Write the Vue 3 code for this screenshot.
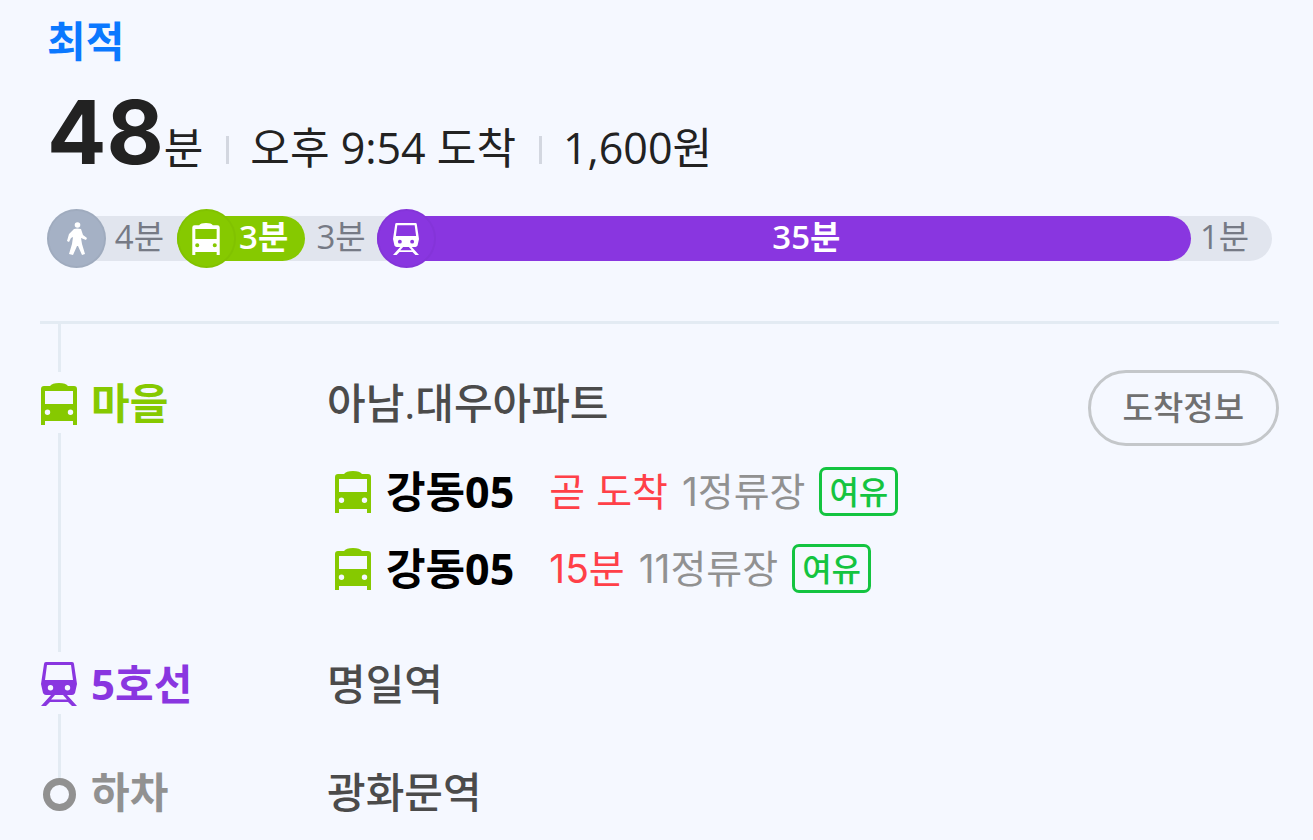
<template>
  <main class="route-page">
    <header class="route-summary">
      <h1 class="route-type">최적</h1>

      <div class="summary-line">
        <p class="total-time"><strong>48</strong><span>분</span></p>
        <span class="bar"></span>
        <p>오후 9:54 도착</p>
        <span class="bar"></span>
        <p>1,600원</p>
      </div>

      <ol class="time-track">
        <li
          v-for="(segment, index) in segments"
          :key="index"
          class="segment"
          :class="segment.type"
          :style="{ width: segment.share + '%' }"
        >
          <span v-if="segment.icon" class="segment-icon">
            <svg v-if="segment.icon === 'walk'" class="walk-icon" viewBox="0 0 20 33" aria-hidden="true">
              <circle cx="10.500" cy="3" r="2.800" />
              <path d="M7 7q3-1 7 0l2 6 4 3-1 2-5-2 1 6 3 10-3 1-4-9h-1l-4 9-4-1 3-10 1-7-2 1-2 4-2-1 2-7z" />
            </svg>
            <svg v-else-if="segment.icon === 'bus'" class="bus-icon" viewBox="0 0 36 42" aria-hidden="true">
              <path fill-rule="evenodd" :d="busPath" />
            </svg>
            <svg v-else class="train-icon" viewBox="0 0 36 44" aria-hidden="true">
              <path fill-rule="evenodd" :d="trainPath" />
            </svg>
          </span>
          <span class="segment-time">{{ segment.minutes }}분</span>
        </li>
      </ol>
    </header>

    <ol class="steps">
      <li class="step">
        <div class="rail">
          <span class="line first"></span>
          <svg class="step-icon bus" viewBox="0 0 36 42" aria-hidden="true">
            <path fill-rule="evenodd" :d="busPath" />
          </svg>
          <span class="line rest"></span>
        </div>
        <strong class="step-label bus">마을</strong>
        <div class="step-body">
          <h2>아남.대우아파트</h2>
          <ul class="arrivals">
            <li v-for="(bus, index) in arrivals" :key="index" class="arrival">
              <svg class="arrival-icon bus" viewBox="0 0 36 42" aria-hidden="true">
                <path fill-rule="evenodd" :d="busPath" />
              </svg>
              <strong>{{ bus.name }}</strong>
              <span class="remain">{{ bus.remain }}</span>
              <span class="stops">{{ bus.stops }}정류장</span>
              <span class="badge">{{ bus.crowd }}</span>
            </li>
          </ul>
        </div>
        <button type="button" class="info-btn">도착정보</button>
      </li>

      <li class="step subway-step">
        <div class="rail">
          <svg class="step-icon train" viewBox="0 0 36 44" aria-hidden="true">
            <path fill-rule="evenodd" :d="trainPath" />
          </svg>
          <span class="line rest"></span>
        </div>
        <strong class="step-label train">5호선</strong>
        <div class="step-body">
          <h2>명일역</h2>
        </div>
      </li>

      <li class="step end-step">
        <div class="rail">
          <span class="line first"></span>
          <span class="end-dot"></span>
        </div>
        <strong class="step-label end">하차</strong>
        <div class="step-body">
          <h2>광화문역</h2>
        </div>
      </li>
    </ol>
  </main>
</template>

<script setup>
const busPath =
  'M3 3h6q2-3 9-3t9 3h6q3 0 3 3v36h-4v-4H4v4H0V6q0-3 3-3zM4 8v13h28V8zM6.500 26.500a2.700 2.700 0 1 0 0 5.400 2.700 2.700 0 1 0 0-5.400zM29.500 26.500a2.700 2.700 0 1 0 0 5.400 2.700 2.700 0 1 0 0-5.400z'

const trainPath =
  'M5 0h26q2 0 2 2l3 20-2 9q-1 2-3 2h-5l10 11h-5l-4-4H9l-4 4H0l10-11H5q-2 0-3-2L0 22 3 2q0-2 2-2zM6 3L4 18h28L30 3zM9.500 23a2.700 2.700 0 1 0 0 5.400 2.700 2.700 0 1 0 0-5.400zM26.500 23a2.700 2.700 0 1 0 0 5.400 2.700 2.700 0 1 0 0-5.400zM14 33l-4 4.500h16L22 33z'

const segments = [
  { type: 'walk', icon: 'walk', minutes: 4, share: 10.6 },
  { type: 'bus', icon: 'bus', minutes: 3, share: 10.5 },
  { type: 'walk', icon: '', minutes: 3, share: 5.8 },
  { type: 'train', icon: 'train', minutes: 35, share: 66.5 },
  { type: 'walk', icon: '', minutes: 1, share: 6.6 },
]

const arrivals = [
  { name: '강동05', remain: '곧 도착', stops: 1, crowd: '여유' },
  { name: '강동05', remain: '15분', stops: 11, crowd: '여유' },
]
</script>

<style>
body {
  margin: 0;
  background: #f5f8ff;
}
</style>

<style scoped>
* {
  box-sizing: border-box;
}

h1,
h2,
p,
ol,
ul {
  margin: 0;
  padding: 0;
  list-style: none;
}

svg {
  display: block;
  flex-shrink: 0;
  fill: currentColor;
}

.route-page {
  padding: 17px 34px 20px 40px;
  color: #222;
  font-family: 'Open Sans', 'Noto Sans CJK KR', sans-serif;
  font-size: 42px;
  line-height: 48px;
}

.route-summary {
  padding: 0 7px 60px;
  border-bottom: 3px solid #e3ebf3;
}

.route-type {
  color: #0a78ff;
  font-size: 42px;
  font-weight: 700;
}

.summary-line {
  display: flex;
  align-items: flex-end;
  height: 105px;
  font-size: 43px;
  line-height: 44px;
}

.total-time {
  display: flex;
  align-items: flex-end;
}

.total-time strong {
  font-family: Inter, sans-serif;
  font-size: 88px;
  font-weight: 700;
  line-height: 76px;
}

.bar {
  width: 3px;
  height: 28px;
  margin: 0 21px 6px 23px;
  background: #d3d7e0;
}

.time-track {
  display: flex;
  align-items: center;
  height: 45px;
  margin-top: 46px;
  border-radius: 23px;
  background: #e1e5ee;
}

.segment {
  display: flex;
  align-items: center;
  height: 45px;
  color: #767a85;
  font-size: 33px;
}

.segment-icon {
  display: flex;
  flex-shrink: 0;
  align-items: center;
  justify-content: center;
  width: 59px;
  height: 59px;
  margin-right: -14px;
  border: 2px solid rgba(0, 0, 0, 0.03);
  border-radius: 50%;
  color: #fff;
}

.segment-time {
  flex: 1;
  padding-bottom: 3px;
  text-align: center;
}

.segment.bus,
.segment.train {
  border-radius: 23px;
  color: #fff;
  font-weight: 600;
}

.segment.bus,
.segment.bus .segment-icon {
  background-color: #86c900;
}

.segment.train,
.segment.train .segment-icon {
  background-color: #8936e0;
}

.segment.walk .segment-icon {
  margin-right: -4px;
  background-color: #a5b1c5;
}

.segment:last-child {
  padding-right: 14px;
}

.walk-icon {
  width: 20px;
  height: 33px;
}

.bus-icon {
  width: 28px;
  height: 32px;
}

.train-icon {
  width: 26px;
  height: 32px;
}

.step {
  display: grid;
  grid-template-columns: 38px 249px 1fr auto;
  align-items: start;
  min-height: 328px;
}

.subway-step {
  min-height: 108px;
}

.end-step {
  min-height: 60px;
}

.rail {
  display: flex;
  flex-direction: column;
  align-items: center;
  align-self: stretch;
}

.line {
  width: 3px;
  background: #e3ebf3;
}

.line.first {
  height: 48px;
}

.line.rest {
  flex: 1;
  margin-top: 8px;
}

.step-icon {
  width: 36px;
  height: 42px;
  margin-top: 11px;
}

.subway-step .step-icon {
  height: 44px;
  margin-top: 10px;
}

.end-step .line.first {
  height: 18px;
}

.end-dot {
  width: 33px;
  height: 33px;
  border: 7px solid #919191;
  border-radius: 50%;
}

.step-label {
  padding: 55px 0 0 13px;
  font-weight: 700;
}

.step-body {
  padding-top: 55px;
}

.step-body h2 {
  color: #4b4b4b;
  font-size: 42px;
  font-weight: 500;
}

.subway-step .step-label,
.subway-step .step-body,
.end-step .step-label,
.end-step .step-body {
  padding-top: 8px;
}

.step-label.bus,
.step-icon.bus,
.arrival-icon.bus {
  color: #86c900;
}

.step-label.train,
.step-icon.train {
  color: #8936e0;
}

.step-label.end {
  color: #919191;
}

.arrivals {
  display: grid;
  gap: 28px;
  margin-top: 40px;
}

.arrival {
  display: flex;
  align-items: center;
  height: 49px;
  padding-left: 8px;
  font-size: 39px;
  white-space: nowrap;
}

.arrival strong {
  margin-left: 15px;
  color: #000;
  font-size: 43px;
  font-weight: 700;
}

.arrival-icon {
  width: 36px;
  height: 42px;
}

.remain,
.stops {
  font-family: Inter, 'Noto Sans CJK KR', sans-serif;
}

.remain {
  margin-left: 35px;
  color: #ff4048;
}

.stops {
  margin-left: 14px;
  color: #919191;
}

.badge {
  margin-left: 14px;
  padding: 0 7px;
  border: 3px solid #14c440;
  border-radius: 7px;
  color: #14c440;
  font-size: 32px;
  font-weight: 500;
  line-height: 43px;
}

.info-btn {
  height: 76px;
  margin-top: 46px;
  padding: 0 32px;
  border: 3px solid #c4c7ca;
  border-radius: 38px;
  background: transparent;
  color: #707070;
  font: inherit;
  font-size: 33px;
  font-weight: 500;
  cursor: pointer;
}
</style>
